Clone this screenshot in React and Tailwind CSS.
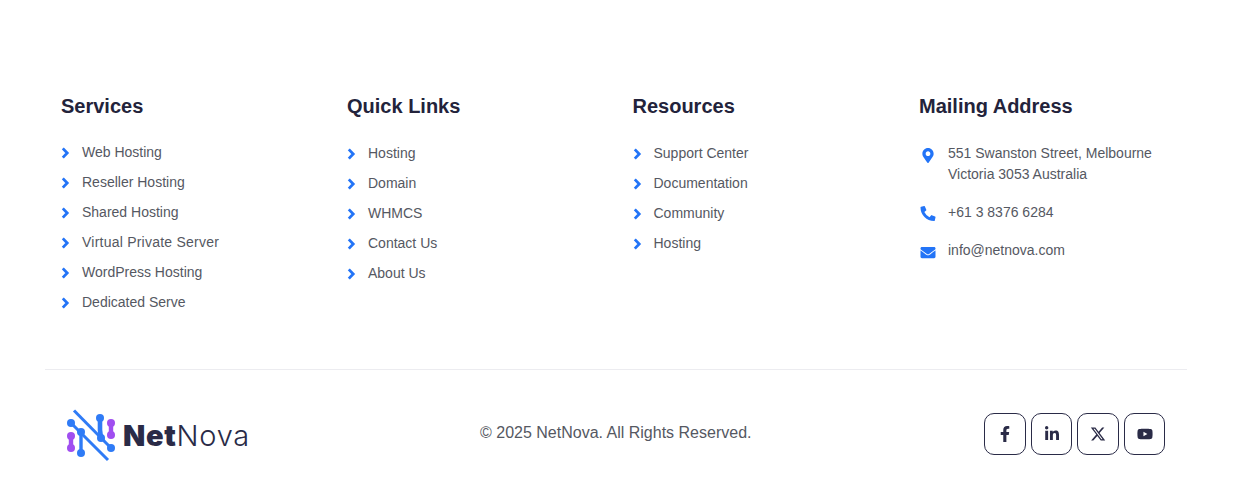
import { FaFacebookF, FaLinkedinIn, FaYoutube, FaMapMarkerAlt, FaPhoneAlt, FaEnvelope } from 'react-icons/fa';
import { FaXTwitter } from 'react-icons/fa6';

const columns = [
  { title: 'Services', width: 'w-[286px]', top: 'mt-[19px]', links: ['Web Hosting', 'Reseller Hosting', 'Shared Hosting', 'Virtual Private Server', 'WordPress Hosting', 'Dedicated Serve'] },
  { title: 'Quick Links', width: 'w-[285.5px]', top: 'mt-[20px]', links: ['Hosting', 'Domain', 'WHMCS', 'Contact Us', 'About Us'] },
  { title: 'Resources', width: 'w-[286.5px]', top: 'mt-[20px]', links: ['Support Center', 'Documentation', 'Community', 'Hosting'] },
];

function Chevron() {
  return (
    <svg width="10" height="12" viewBox="0 0 10 12" fill="none" className="mr-[11px] mt-[2px] shrink-0">
      <path d="M1.8 1.4 L6.2 6 L1.8 10.6" stroke="#2374f7" strokeWidth="2.8" />
    </svg>
  );
}

function LinkColumn({ title, width, top, links }) {
  return (
    <div className={`${width} shrink-0 px-4`}>
      <h4 className="text-[20px] leading-[24px] font-bold text-[#23233b]">{title}</h4>
      <ul className={`${top} flex flex-col`}>
        {links.map((link) => (
          <li key={link} className="flex items-center h-[30px] text-[14px] text-[#555862]">
            <Chevron />
            {/* this one runs wider in the reference */}
            <span className={link === 'Virtual Private Server' ? 'tracking-[0.23px]' : ''}>{link}</span>
          </li>
        ))}
      </ul>
    </div>
  );
}

function Logo() {
  return (
    <div className="flex items-center gap-[5px]">
      <svg width="54" height="58" viewBox="0 0 54 58" fill="none" className="mt-[2px]">
        <g stroke="#2f7bf6" strokeLinecap="butt" strokeLinejoin="round">
          <path d="M10 4.5 L47 42" strokeWidth="3" />
          <path d="M7 17 L44 54" strokeWidth="3" />
          <path d="M36 12 L36 24 L37 32" strokeWidth="4.6" />
          <path d="M17 26 L17 47" strokeWidth="3.4" />
        </g>
        <circle cx="7" cy="17" r="4" fill="#2f7bf6" />
        <circle cx="17" cy="26" r="4" fill="#2f7bf6" />
        <circle cx="17" cy="47" r="4" fill="#2f7bf6" />
        <circle cx="36" cy="12" r="4" fill="#2f7bf6" />
        <circle cx="37" cy="32" r="4" fill="#2f7bf6" />
        <circle cx="47" cy="42" r="4" fill="#2f7bf6" />
        <g fill="#a04ef0">
          <circle cx="47" cy="17" r="4" />
          <circle cx="47" cy="29" r="4" />
          <rect x="44.8" y="17" width="4.4" height="12" />
          <circle cx="7" cy="30" r="4" />
          <circle cx="7" cy="42" r="4" />
          <rect x="4.8" y="30" width="4.4" height="12" />
        </g>
      </svg>
      <div className="text-[29px] leading-none tracking-[0.7px] text-[#2a2b47] font-['Inter',sans-serif] mt-[2px]">
        <span className="font-black">Net</span>
        <span className="font-light">Nova</span>
      </div>
    </div>
  );
}

const socials = [
  { icon: FaFacebookF, w: 'w-[42px]' },
  { icon: FaLinkedinIn, w: 'w-[41px]' },
  { icon: FaXTwitter, w: 'w-[42px]' },
  { icon: FaYoutube, w: 'w-[41px]' },
];

export default function App() {
  return (
    <footer className="h-[482px] w-full bg-white font-['Liberation_Sans',Arial,sans-serif] pl-[45px] pt-[94px]">
      <div className="flex h-[276px] w-[1142px] border-b border-[#ececf0]">
        {columns.map((col) => (
          <LinkColumn key={col.title} {...col} />
        ))}
        <div className="w-[284px] shrink-0 pl-4">
          <h4 className="text-[20px] leading-[24px] font-bold text-[#23233b]">Mailing Address</h4>
          <ul className="mt-[25px] text-[14px] text-[#555862]">
            <li className="flex">
              <FaMapMarkerAlt className="w-[18px] h-[15px] mt-[5px] mr-[11px] text-[#2374f7]" />
              <span className="leading-[21px]">551 Swanston Street, Melbourne<br />Victoria 3053 Australia</span>
            </li>
            <li className="flex mt-[17px]">
              <FaPhoneAlt className="w-[18px] h-[15px] mt-[4px] mr-[11px] text-[#2374f7]" />
              <span className="leading-[21px]">+61 3 8376 6284</span>
            </li>
            <li className="flex mt-[17px]">
              <FaEnvelope className="w-[18px] h-[15px] mt-[5px] mr-[11px] text-[#2374f7]" />
              <span className="leading-[21px]">info@netnova.com</span>
            </li>
          </ul>
        </div>
      </div>
      <div className="flex items-center w-[1142px] h-[128px]">
        <div className="w-[435px] pl-[19px]"><Logo /></div>
        <div className="w-[504px] text-[16px] text-[#555862] -mt-[3px]">© 2025 NetNova. All Rights Reserved.</div>
        <div className="flex gap-[5px]">
          {socials.map(({ icon: Icon, w }, i) => (
            <a key={i} className={`${w} h-[42px] flex items-center justify-center rounded-[10px] border border-[#2a2b47] text-[#2a2b47] text-[16px]`}>
              <Icon />
            </a>
          ))}
        </div>
      </div>
    </footer>
  );
}
